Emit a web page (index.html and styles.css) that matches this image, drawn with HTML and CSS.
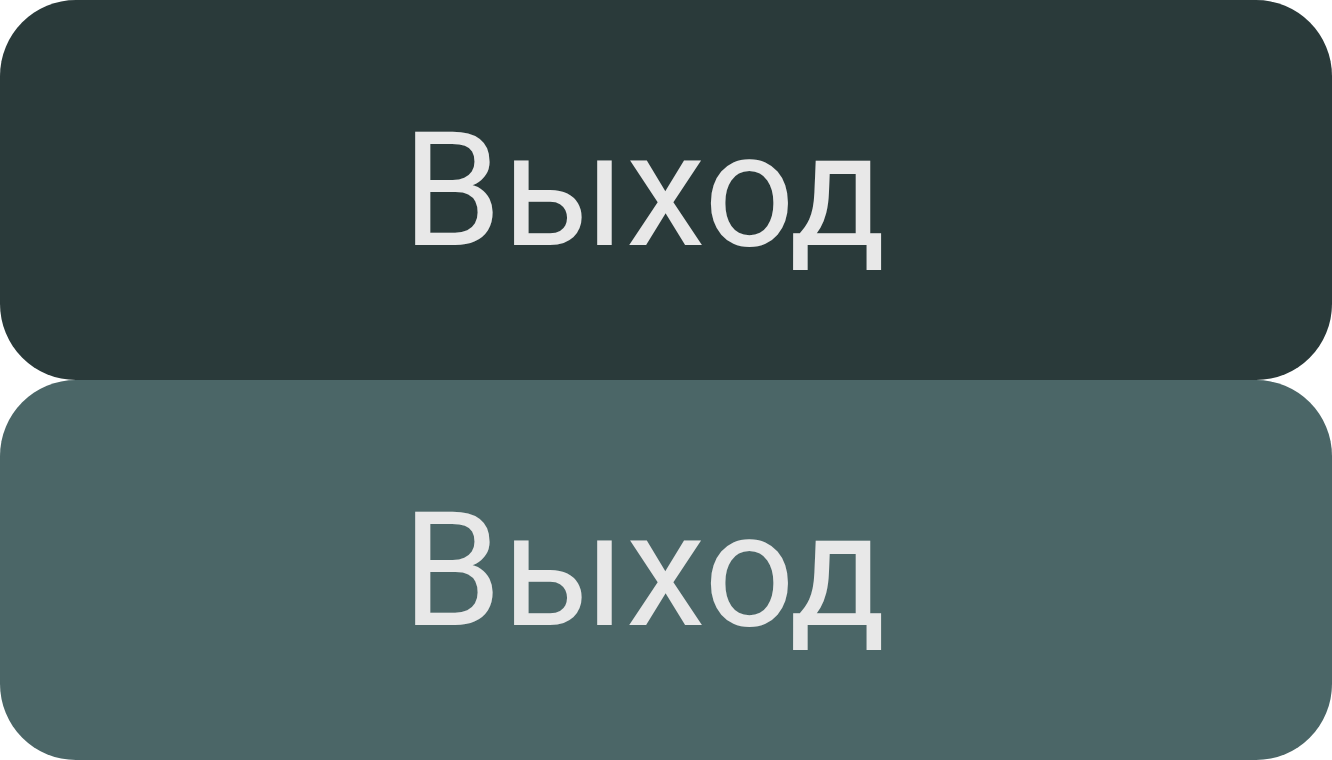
FILE: index.html
```html
<!DOCTYPE html>
<html lang="ru">
<head>
<meta charset="utf-8">
<link rel="stylesheet" href="styles.css">
</head>
<body>
<div class="stack">
  <button class="btn btn-dark">Выход</button>
  <button class="btn btn-light">Выход</button>
</div>
</body>
</html>
```
FILE: styles.css
```css
html, body {
  margin: 0;
  padding: 0;
  background: #ffffff;
}
.stack {
  display: flex;
  flex-direction: column;
  width: 1332px;
}
.btn {
  height: 380px;
  width: 100%;
  border: none;
  border-radius: 76px;
  margin: 0;
  padding: 0 44px 0 0;
  font-family: Roboto, "Noto Sans", sans-serif;
  font-size: 160px;
  font-weight: 400;
  color: #e8e8e8;
  display: flex;
  align-items: center;
  justify-content: center;
}
.btn-dark {
  background: #2a3a3a;
}
.btn-light {
  background: #4b6667;
}
```
